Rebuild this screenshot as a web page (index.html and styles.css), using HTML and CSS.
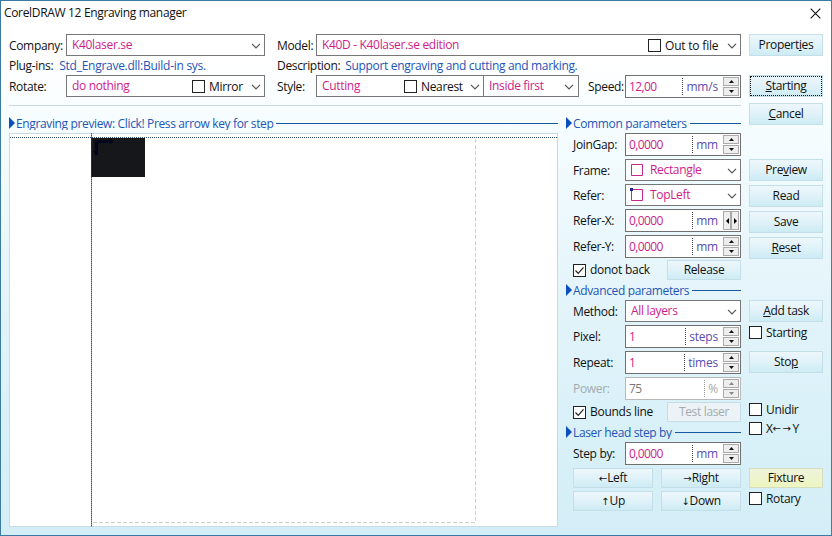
FILE: index.html
```html
<!DOCTYPE html>
<html lang="en">
<head>
<meta charset="utf-8">
<title>CorelDRAW 12 Engraving manager</title>
<link rel="stylesheet" href="styles.css">
</head>
<body>
<svg class="defs" width="0" height="0">
  <symbol id="chev" viewBox="0 0 10 6"><path d="M1 .8 5 4.8 9 .8" fill="none" stroke="#555" stroke-width="1.2"/></symbol>
  <symbol id="up" viewBox="0 0 5 3"><path d="M0 3 2.5 0 5 3z" fill="currentColor"/></symbol>
  <symbol id="down" viewBox="0 0 5 3"><path d="M0 0 2.5 3 5 0z" fill="currentColor"/></symbol>
  <symbol id="tri" viewBox="0 0 6 12"><path d="M0 0 6 6 0 12z" fill="#0a4fc0"/></symbol>
  <symbol id="tick" viewBox="0 0 11 11"><path d="M1.5 5.5 4.2 8.3 9.5 2.3" fill="none" stroke="#222" stroke-width="1.2"/></symbol>
</svg>
<div class="window">
  <header class="titlebar"><span class="title">CorelDRAW 12 Engraving manager</span>
    <svg class="close" width="11" height="11" viewBox="0 0 11 11"><path d="M.7.7 10.3 10.3M10.3.7.7 10.3" stroke="#111" stroke-width="1.1"/></svg>
  </header>
  <div class="body">
    <main class="main">
      <div class="row machine">
        <label class="l-a">Company:</label>
        <div class="combo w-a"><span class="val">K40laser.se</span><svg class="chev"><use href="#chev"/></svg></div>
        <label class="l-b">Model:</label>
        <div class="combo w-b"><span class="val">K40D - K40laser.se edition</span><i class="box"></i><span class="opt">Out to file</span><svg class="chev"><use href="#chev"/></svg></div>
      </div>
      <div class="row info">
        <div class="info-a"><span>Plug-ins:</span><span class="blue plug">Std_Engrave.dll:Build-in sys.</span></div>
        <div class="info-b"><span>Description:</span><span class="blue desc">Support engraving and cutting and marking.</span></div>
      </div>
      <div class="row style">
        <label class="l-a">Rotate:</label>
        <div class="combo w-a"><span class="val">do nothing</span><i class="box"></i><span class="opt">Mirror</span><svg class="chev"><use href="#chev"/></svg></div>
        <label class="l-b">Style:</label>
        <div class="combo w-c"><span class="val">Cutting</span><i class="box"></i><span class="opt near">Nearest</span><svg class="chev"><use href="#chev"/></svg></div>
        <div class="combo w-d"><span class="val">Inside first</span><svg class="chev"><use href="#chev"/></svg></div>
        <label class="l-c">Speed:</label>
        <div class="spin"><span class="num">12,00</span><span class="unit">mm/s</span><div class="arrows"><b><svg><use href="#up"/></svg></b><b><svg><use href="#down"/></svg></b></div></div>
      </div>
      <div class="rule"></div>
      <div class="columns">
        <section class="preview">
          <h2><svg><use href="#tri"/></svg><span>Engraving preview: Click! Press arrow key for step</span></h2>
          <svg class="canvas" width="549" height="394" viewBox="0 0 549 394">
            <rect x=".5" y=".5" width="548" height="393" fill="#fff" stroke="#c9dbe2"/>
            <path d="M84 389.5H466.500V5" fill="none" stroke="#cfcfcf" stroke-dasharray="4 2"/>
            <rect x="83" y="5" width="53" height="39" fill="#15171a"/>
            <path d="M87.500 22V8.500H103" fill="none" stroke="#03041a" stroke-width="3"/>
            <path d="M84 18h6l-3 5zM100 5l5 3.500-5 3z" fill="#03041a"/>
            <path d="M1 4.500H548" stroke="#33536f" stroke-dasharray="1 1"/>
            <path d="M82.500 0V394" stroke="#7f9db5"/>
            <path d="M82.500 0V394" stroke="#33536f" stroke-dasharray="1 1"/>
            <path d="M82.500 5V44" stroke="#1c2f45"/>
          </svg>
        </section>
        <section class="params">
          <h2><svg><use href="#tri"/></svg><span>Common parameters</span></h2>
          <div class="fields common">
            <label>JoinGap:</label>
            <div class="spin"><span class="num">0,0000</span><span class="unit">mm</span><div class="arrows"><b><svg><use href="#up"/></svg></b><b><svg><use href="#down"/></svg></b></div></div>
            <label>Frame:</label>
            <div class="combo"><svg class="frame" width="12" height="12"><path d="M.5.500h11v11H.5z" fill="none" stroke="#c4278f"/></svg><span class="val">Rectangle</span><svg class="chev"><use href="#chev"/></svg></div>
            <label>Refer:</label>
            <div class="combo"><svg class="frame ref" width="13" height="13"><path d="M1.500 1.500h11v11h-11z" fill="none" stroke="#c4278f"/><path d="M0 0h3v3H0z" fill="#23238e"/></svg><span class="val">TopLeft</span><svg class="chev"><use href="#chev"/></svg></div>
            <label>Refer-X:</label>
            <div class="spin"><span class="num">0,0000</span><span class="unit">mm</span><div class="arrows side"><b><svg viewBox="0 0 3 6"><path d="M3 0 0 3 3 6z"/></svg></b><b><svg viewBox="0 0 3 6"><path d="M0 0 3 3 0 6z"/></svg></b></div></div>
            <label>Refer-Y:</label>
            <div class="spin"><span class="num">0,0000</span><span class="unit">mm</span><div class="arrows"><b><svg><use href="#up"/></svg></b><b><svg><use href="#down"/></svg></b></div></div>
          </div>
          <div class="pair"><span class="check"><i class="box"><svg><use href="#tick"/></svg></i>donot back</span><button>Release</button></div>
          <h2><svg><use href="#tri"/></svg><span>Advanced parameters</span></h2>
          <div class="fields advanced">
            <label>Method:</label>
            <div class="combo"><span class="val">All layers</span><svg class="chev"><use href="#chev"/></svg></div>
            <label>Pixel:</label>
            <div class="spin"><span class="num">1</span><span class="unit">steps</span><div class="arrows"><b><svg><use href="#up"/></svg></b><b><svg><use href="#down"/></svg></b></div></div>
            <label>Repeat:</label>
            <div class="spin"><span class="num">1</span><span class="unit">times</span><div class="arrows"><b><svg><use href="#up"/></svg></b><b><svg><use href="#down"/></svg></b></div></div>
            <label class="off">Power:</label>
            <div class="spin off"><span class="num">75</span><span class="unit">%</span><div class="arrows"><b><svg><use href="#up"/></svg></b><b><svg><use href="#down"/></svg></b></div></div>
          </div>
          <div class="pair"><span class="check"><i class="box"><svg><use href="#tick"/></svg></i>Bounds line</span><button class="off">Test laser</button></div>
          <h2><svg><use href="#tri"/></svg><span>Laser head step by</span></h2>
          <div class="fields step">
            <label>Step by:</label>
            <div class="spin"><span class="num">0,0000</span><span class="unit">mm</span><div class="arrows"><b><svg><use href="#up"/></svg></b><b><svg><use href="#down"/></svg></b></div></div>
          </div>
          <div class="moves">
            <button><em>←</em>Left</button><button><em>→</em>Right</button>
            <button><em>↑</em>Up</button><button><em>↓</em>Down</button>
          </div>
        </section>
      </div>
    </main>
    <aside class="actions">
      <button>Propert<u>i</u>es</button>
      <button class="g19 focus"><u>S</u>tarting</button>
      <button class="g6"><u>C</u>ancel</button>
      <button class="g34">Pre<u>v</u>iew</button>
      <button class="g4">Read</button>
      <button class="g4">Save</button>
      <button class="g4"><u>R</u>eset</button>
      <button class="g41"><u>A</u>dd task</button>
      <span class="check g3"><i class="box"></i>Starting</span>
      <button class="g12">Sto<u>p</u></button>
      <span class="check g30"><i class="box"></i>Unidir</span>
      <span class="check swap g6"><i class="box"></i>X<em>←</em><em>→</em>Y</span>
      <button class="g33 fixture">Fixture</button>
      <span class="check g4"><i class="box"></i>Rotary</span>
    </aside>
  </div>
</div>
</body>
</html>
```

FILE: styles.css
```css
* { box-sizing: border-box; }
body {
  margin: 0;
  font: 12px/16px "Open Sans", "Noto Sans", sans-serif;
  letter-spacing: -0.33px;
  color: #111;
}
svg { display: block; flex: none; }
.defs { position: absolute; }
.window {
  width: 832px;
  height: 536px;
  border: 1px solid #3b7ba3;
  border-right-color: #2e86b2;
  background: linear-gradient(#fff 0, #fff 60px, #f6fdff 120px, #e3f4fa 300px, #d8f0f8 440px, #d4eef7 100%);
  overflow: hidden;
  white-space: nowrap;
}
.titlebar {
  height: 33px;
  display: flex;
  justify-content: space-between;
  padding: 4px 10px 0 3px;
}
.close { margin-top: 3px; }
.body { display: flex; gap: 8px; padding-left: 8px; }
.main { width: 732px; }
.row { display: flex; align-items: center; height: 22px; }
label { padding-top: 1px; }
.l-a { width: 57px; }
.l-b { width: 51px; padding-left: 12px; }
.l-c { width: 46px; padding-left: 9px; }
.info { height: 19px; }
.info-a { width: 268px; display: flex; gap: 6px; }
.info-b { display: flex; gap: 5px; }
.blue { color: #1f55b5; }
.plug { letter-spacing: -0.27px; }
.combo {
  display: flex;
  align-items: center;
  height: 22px;
  border: 1px solid #777;
  background: #fff;
  padding: 0 3px 0 5px;
}
.combo .val { flex: 1; color: #cf1c8a; }
.chev { width: 10px; height: 6px; margin-top: 2px; }
.w-a { width: 199px; }
.w-b { width: 425px; }
.w-c { width: 168px; }
.w-d { width: 96px; margin-left: -1px; padding-right: 4px; }
.opt { width: 42px; padding-top: 1px; }
.w-b .opt { width: 62px; letter-spacing: -0.2px; }
.near { width: 49px; }
.box {
  width: 13px;
  height: 13px;
  border: 1px solid #222;
  background: #fff;
  margin-right: 4px;
  flex: none;
}
.combo .box { margin-top: 1px; }
.box svg { width: 11px; height: 11px; }
.spin {
  display: flex;
  align-items: center;
  height: 23px;
  width: 116px;
  border: 1px solid #707070;
  background: #fff;
  padding: 0 1px 0 3px;
}
.style .spin { margin-bottom: -1px; }
.num { flex: 1; color: #cf1c8a; letter-spacing: -0.6px; }
.unit {
  height: 17px;
  line-height: 18px;
  border-left: 1px dotted #444;
  padding: 0 5px 0 3px;
  color: #5a4db0;
  letter-spacing: -0.2px;
}
.arrows {
  width: 16px;
  height: 19px;
  display: grid;
  grid-template-rows: 9px 9px;
  gap: 1px;
}
.arrows b {
  display: flex;
  align-items: center;
  justify-content: center;
  border: 1px solid #aaa;
  background: #eee;
}
.arrows svg { width: 5px; height: 3px; }
.arrows.side { grid-template: 19px / 8px 8px; gap: 0; }
.arrows.side svg { width: 3px; height: 6px; }
.rule { height: 1px; background: #cbd9df; margin-top: 8px; }
.columns { display: flex; gap: 8px; margin-top: 10px; }
.preview { width: 549px; }
.params { width: 175px; }
h2 {
  display: flex;
  align-items: center;
  height: 14px;
  margin: 0;
  font: inherit;
  color: #1f55b5;
  overflow: hidden;
}
h2 svg { width: 6px; height: 12px; margin-right: 1px; }
h2::after { content: ""; flex: 1; height: 1px; background: #155aa0; margin-left: 3px; }
h2 span { letter-spacing: -0.36px; padding-top: 2px; }
.preview .canvas, .fields { margin-top: 3px; }
.fields {
  display: grid;
  grid-template-columns: 52px 116px;
  row-gap: 3px;
  padding-left: 7px;
  align-items: center;
}
.common { grid-template-rows: 23px 22px 22px 23px 23px; }
.advanced { grid-template-rows: 22px 23px 23px 23px; }
.frame { margin-right: 7px; }
.frame.ref { margin: -1px 7px 0 -1px; }
.pair { display: flex; justify-content: space-between; padding-left: 7px; margin: 2px 0 3px; }
.pair button { height: 20px; width: 74px; }
.check { display: flex; align-items: center; height: 13px; }
.pair .check { height: 20px; letter-spacing: -0.27px; }
button {
  font: inherit;
  letter-spacing: inherit;
  color: #111;
  display: block;
  width: 74px;
  height: 22px;
  padding: 0;
  border: 1px solid #c5dfe8;
  background: linear-gradient(#edf7fb, #e0f2f9 50%, #cdebf4);
}
.actions { width: 74px; }
.focus { outline: 1px dotted #111; outline-offset: -2px; }
.off { color: #a3abb0; }
.spin.off { border-color: #b8b8b8; }
.off .num { color: #777; }
.off .unit { color: #aaa; border-color: #999; }
.off .arrows { color: #888; }
button.off { background: #ecf2f5; }
.moves { display: grid; grid-template-columns: 80px 80px; gap: 3px 8px; padding: 3px 0 0 7px; }
.moves button { width: 80px; height: 20px; }
em { font: 10px/10px "DejaVu Sans"; letter-spacing: 0; }
.swap em { letter-spacing: 1.5px; }
.fixture { height: 20px; background: linear-gradient(#eff3dc, #edf5bf); border-color: #d5dfc0; }
.g3 { margin-top: 4px; }
.g4 { margin-top: 4px; }
.g6 { margin-top: 6px; }
.g12 { margin-top: 12px; }
.g19 { margin-top: 19px; }
.g30 { margin-top: 30px; }
.g33 { margin-top: 33px; }
.g34 { margin-top: 34px; }
.g41 { margin-top: 41px; }
```
